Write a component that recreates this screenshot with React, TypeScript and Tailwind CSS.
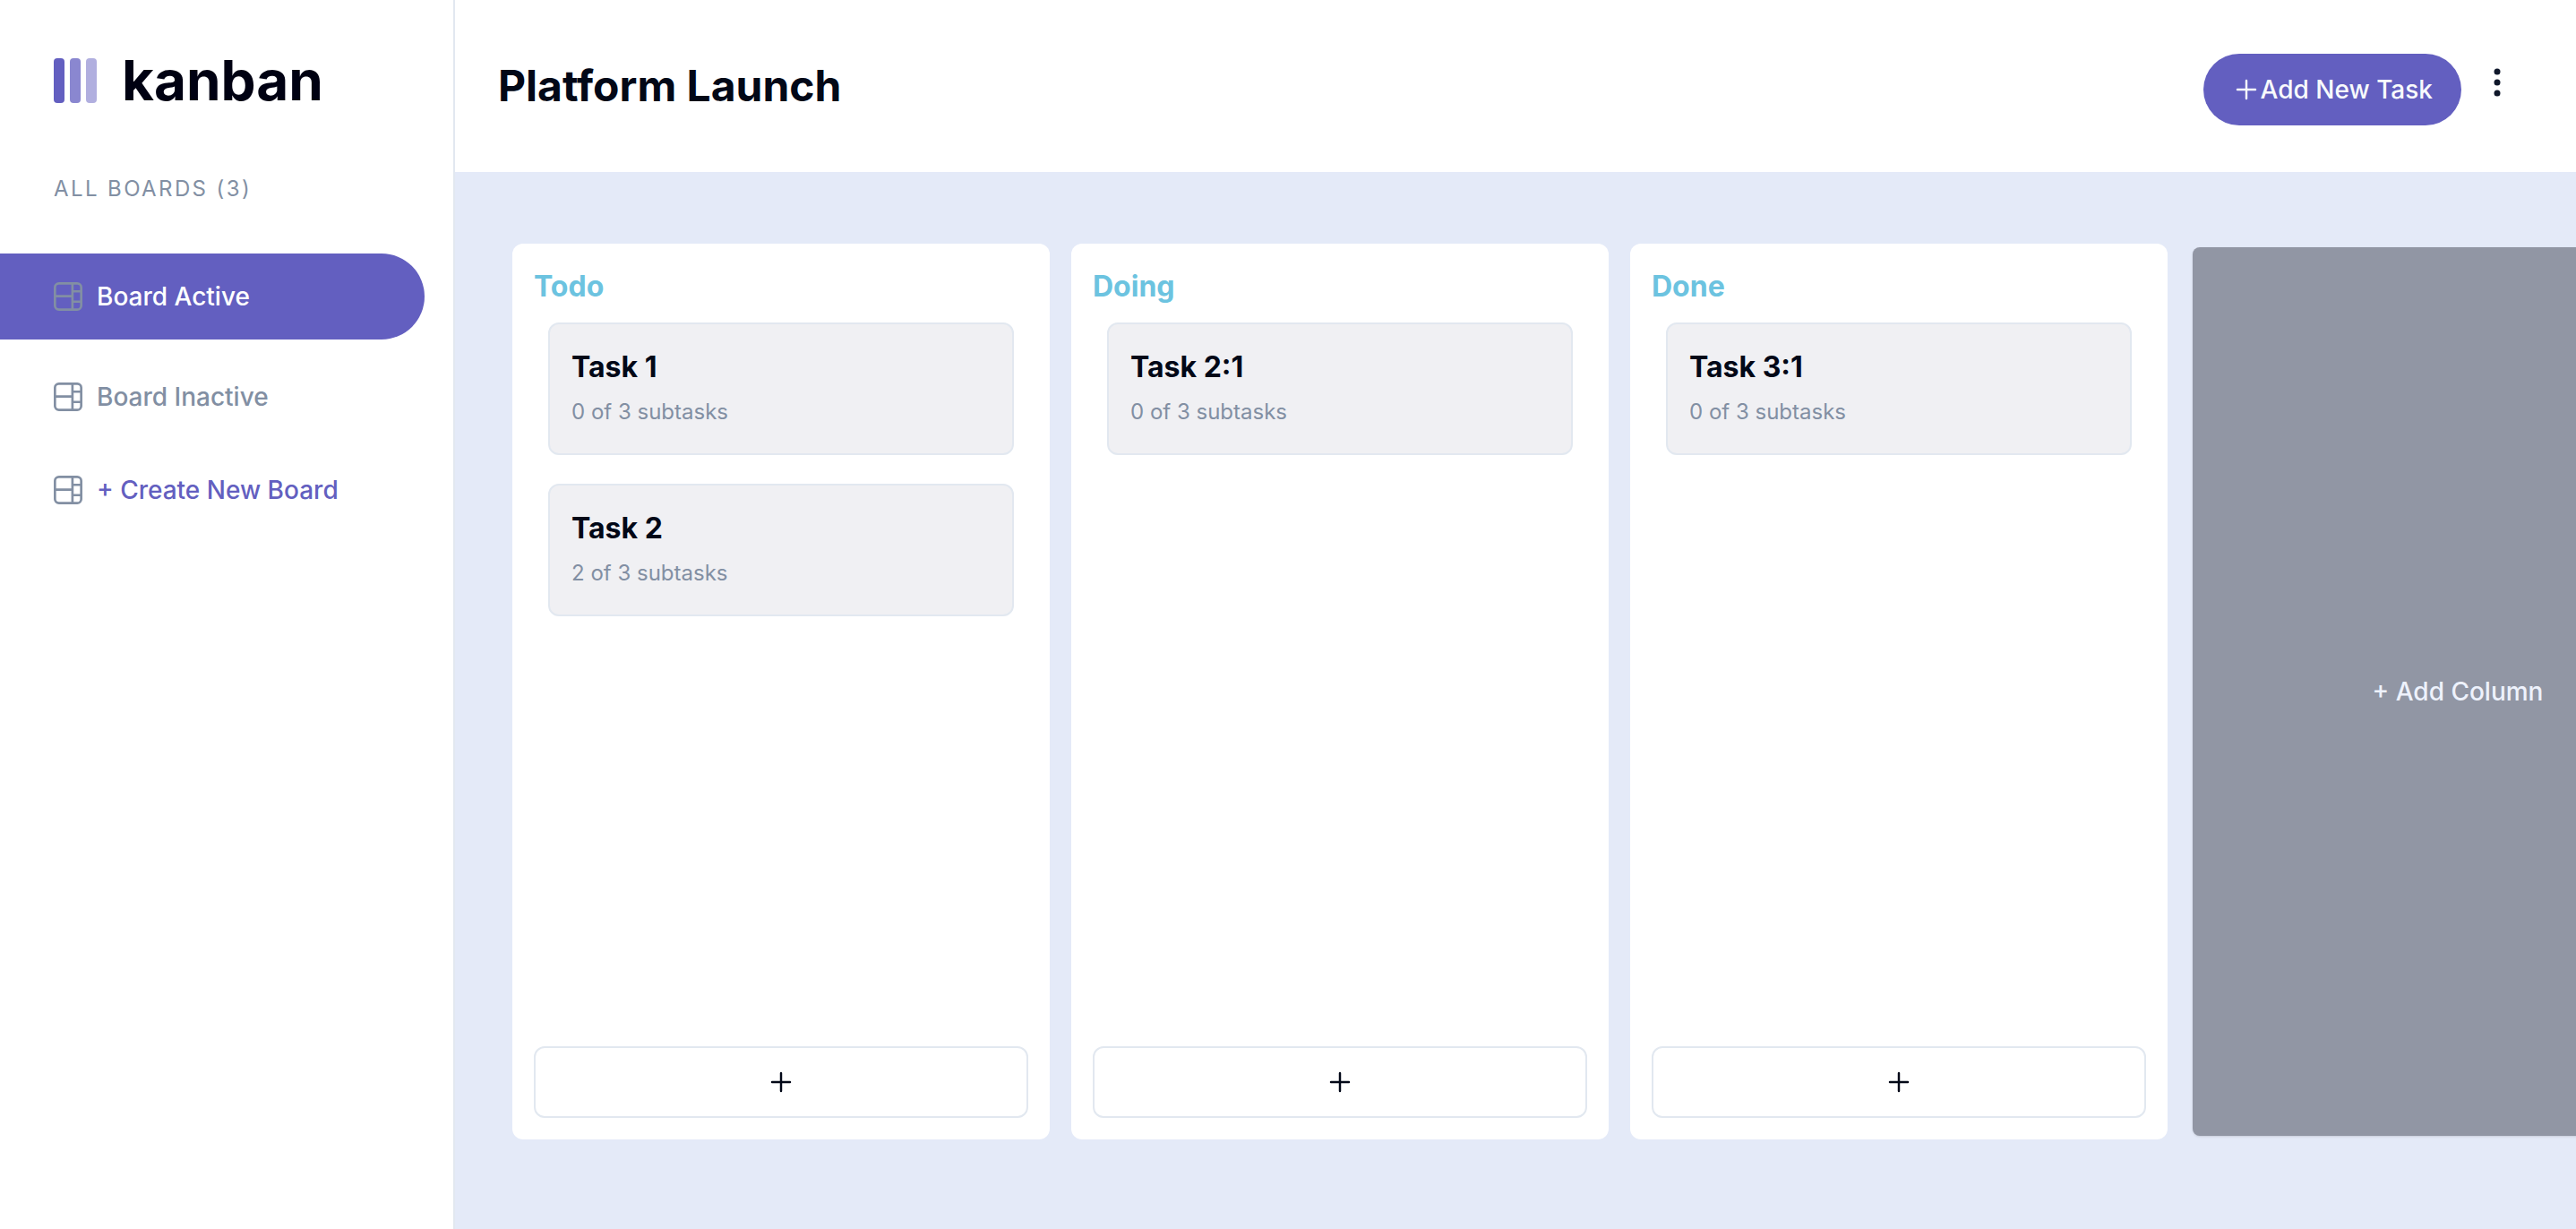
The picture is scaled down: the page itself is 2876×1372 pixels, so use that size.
import type { ReactNode } from "react";

type Task = { title: string; done: number; total: number };
type Column = { name: string; tasks: Task[] };

const columns: Column[] = [
  {
    name: "Todo",
    tasks: [
      { title: "Task 1", done: 0, total: 3 },
      { title: "Task 2", done: 2, total: 3 },
    ],
  },
  { name: "Doing", tasks: [{ title: "Task 2:1", done: 0, total: 3 }] },
  { name: "Done", tasks: [{ title: "Task 3:1", done: 0, total: 3 }] },
];

function LogoMark() {
  return (
    <svg viewBox="0 0 24 25" className="h-[50px] w-12" fill="#635FC0" aria-hidden="true">
      <rect width="6" height="25" rx="2" />
      <rect x="9" width="6" height="25" rx="2" opacity="0.75" />
      <rect x="18" width="6" height="25" rx="2" opacity="0.5" />
    </svg>
  );
}

function BoardIcon() {
  return (
    <svg viewBox="0 0 16 16" className="size-8 shrink-0" fill="#828FA3" aria-hidden="true">
      <path d="M0 2.889A2.889 2.889 0 0 1 2.889 0H13.11A2.889 2.889 0 0 1 16 2.889V13.11A2.888 2.888 0 0 1 13.111 16H2.89A2.889 2.889 0 0 1 0 13.111V2.89Zm1.333 5.555v4.667c0 .859.697 1.556 1.556 1.556h6.889V8.444H1.333Zm8.445-1.333V1.333h-6.89A1.556 1.556 0 0 0 1.334 2.89V7.11h8.445Zm4.889-1.333H11.11v4.444h3.556V5.778Zm0 5.778H11.11v3.11h2a1.556 1.556 0 0 0 1.556-1.555v-1.555Zm0-7.112V2.89a1.555 1.555 0 0 0-1.556-1.556h-2v3.111h3.556Z" />
    </svg>
  );
}

function PlusIcon() {
  return (
    <svg
      viewBox="0 0 15 15"
      className="size-8 shrink-0"
      fill="none"
      stroke="currentColor"
      strokeWidth="1.15"
      strokeLinecap="round"
      aria-hidden="true"
    >
      <path d="M7.5 2.8v9.4M2.8 7.5h9.4" />
    </svg>
  );
}

function DotsIcon() {
  return (
    <svg viewBox="0 0 16 32" className="h-8 w-4" fill="#0F172A" aria-hidden="true">
      <circle cx="8" cy="4" r="3.5" />
      <circle cx="8" cy="16" r="3.5" />
      <circle cx="8" cy="28" r="3.5" />
    </svg>
  );
}

function NavButton({ className, children }: { className: string; children: ReactNode }) {
  return (
    <button
      type="button"
      className={"flex w-full items-center gap-4 rounded-r-full pl-[60px] text-[28px] leading-10 font-medium " + className}
    >
      <BoardIcon />
      {children}
    </button>
  );
}

function Sidebar() {
  return (
    <aside className="flex w-[508px] shrink-0 flex-col border-r-2 border-[#E2E8F0] bg-white">
      <div className="flex items-center gap-7 pt-12 pl-[60px]">
        <LogoMark />
        <span className="text-[62px] leading-[84px] font-bold text-[#000112]">kanban</span>
      </div>
      <h2 className="pt-[63px] pl-[60px] text-2xl leading-8 tracking-widest text-[#828FA3]">ALL BOARDS (3)</h2>
      <nav className="flex flex-col gap-2 pt-14 pr-8">
        <NavButton className="h-24 bg-[#635FC0] text-white">Board Active</NavButton>
        <NavButton className="h-28 text-[#828FA3]">Board Inactive</NavButton>
        <NavButton className="h-20 text-[#635FC0]">+ Create New Board</NavButton>
      </nav>
    </aside>
  );
}

function Header() {
  return (
    <header className="flex h-48 shrink-0 items-start justify-between bg-white pr-20 pl-12">
      <h1 className="pt-16 text-5xl leading-[64px] font-bold text-[#020817]">Platform Launch</h1>
      <div className="flex items-start gap-8 pt-[60px]">
        <button
          type="button"
          className="flex h-20 items-center rounded-full bg-[#635FC0] px-8 text-[28px] leading-10 font-medium text-[#F8FAFC]"
        >
          <PlusIcon />
          Add New Task
        </button>
        <button type="button" aria-label="Board menu" className="pt-4">
          <DotsIcon />
        </button>
      </div>
    </header>
  );
}

function TaskCard({ task }: { task: Task }) {
  return (
    <li className="rounded-xl border-2 border-[#E2E8F0] bg-[#F0F0F3] px-6 py-7">
      <h3 className="text-[32px] leading-10 font-bold text-[#020817]">{task.title}</h3>
      <p className="pt-3 text-2xl leading-9 text-[#828FA3]">
        {task.done} of {task.total} subtasks
      </p>
    </li>
  );
}

function BoardColumn({ column }: { column: Column }) {
  return (
    <section className="flex w-[600px] shrink-0 flex-col rounded-xl bg-white p-6">
      <h2 className="pb-4 text-[32px] leading-12 font-bold text-[#6CC3E0]">{column.name}</h2>
      <ul className="flex grow flex-col gap-8 px-4">
        {column.tasks.map((task) => (
          <TaskCard key={task.title} task={task} />
        ))}
      </ul>
      <button
        type="button"
        aria-label={"Add task to " + column.name}
        className="flex h-20 items-center justify-center rounded-xl border-2 border-[#E2E8F0] text-[#020817]"
      >
        <PlusIcon />
      </button>
    </section>
  );
}

export default function App() {
  return (
    <div className="flex min-h-screen bg-[#E4EAF8] font-['Inter',sans-serif]">
      <Sidebar />
      <main className="flex min-w-0 grow flex-col">
        <Header />
        <div className="flex grow gap-6 overflow-hidden pt-20 pb-[100px] pl-16">
          {columns.map((column) => (
            <BoardColumn key={column.name} column={column} />
          ))}
          <div className="flex w-[600px] shrink-0 p-1">
            <button
              type="button"
              className="grow rounded-lg bg-[#9196A4] text-[28px] leading-10 font-medium text-[#EEF2FC] shadow-sm"
            >
              + Add Column
            </button>
          </div>
        </div>
      </main>
    </div>
  );
}
